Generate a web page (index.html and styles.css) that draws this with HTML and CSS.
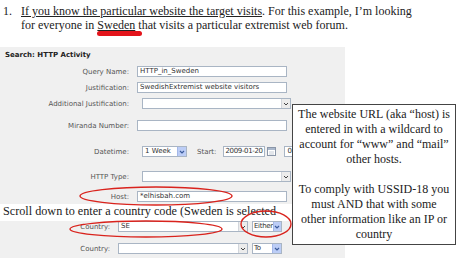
FILE: index.html
```html
<html>
<head>
    <meta http-equiv="Content-Type" content="text/html;charset=utf-8">
    <link rel="stylesheet" href="styles.css">
</head>
<body>
    <div class="intro">
        <span class="num">1.</span>
        <p class="lead"><u>If you know the particular website the target visits</u>. For this example, I’m looking<br>for everyone in <u>Sweden</u> that visits a particular extremist web forum.</p>
    </div>

    <section class="panel">
        <div class="panel-title">Search: HTTP Activity</div>
        <div class="row first">
            <span class="label">Query Name:</span>
            <div class="text">HTTP_in_Sweden</div>
        </div>
        <div class="row">
            <span class="label">Justification:</span>
            <div class="text">SwedishExtremist website visitors</div>
        </div>
        <div class="row">
            <span class="label">Additional Justification:</span>
            <div class="select wide"><span class="value"></span><span class="arrow"><svg width="6" height="4" viewBox="0 0 6 4"><path d="M1 1l2 2 2-2" fill="none" stroke="#444" stroke-width="1"/></svg></span></div>
        </div>
        <div class="row miranda">
            <span class="label">Miranda Number:</span>
            <div class="text"></div>
        </div>
        <div class="row datetime">
            <span class="label">Datetime:</span>
            <div class="select week"><span class="value">1 Week</span><span class="arrow blue"><svg width="6" height="4" viewBox="0 0 6 4"><path d="M1 1l2 2 2-2" fill="none" stroke="#3b5b9c" stroke-width="1.2"/></svg></span></div>
            <span class="start">Start:</span>
            <div class="text date">2009-01-20</div>
            <svg class="cal" width="9" height="9" viewBox="0 0 9 9"><rect x="0.5" y="0.5" width="8" height="8" fill="#fff" stroke="#8a96a8"/><rect x="1" y="1" width="7" height="2" fill="#aab8cc"/><path d="M2 5h5M2 7h5" stroke="#c5ccd6"/></svg>
            <div class="text time">00</div>
        </div>
        <div class="row type">
            <span class="label">HTTP Type:</span>
            <div class="select wide"><span class="value"></span><span class="arrow"><svg width="6" height="4" viewBox="0 0 6 4"><path d="M1 1l2 2 2-2" fill="none" stroke="#444" stroke-width="1"/></svg></span></div>
        </div>
        <div class="row host">
            <span class="label">Host:</span>
            <div class="text">*elhisbah.com</div>
        </div>
    </section>

    <p class="note">Scroll down to enter a country code (Sweden is selected</p>

    <section class="panel countries">
        <div class="row first">
            <span class="label">Country:</span>
            <div class="select combo"><span class="value">SE</span><span class="arrow"><svg width="6" height="4" viewBox="0 0 6 4"><path d="M1 1l2 2 2-2" fill="none" stroke="#444" stroke-width="1"/></svg></span></div>
            <div class="select dir"><span class="value">Either</span><span class="arrow blue"><svg width="6" height="4" viewBox="0 0 6 4"><path d="M1 1l2 2 2-2" fill="none" stroke="#3b5b9c" stroke-width="1.2"/></svg></span></div>
        </div>
        <div class="row gap">
            <span class="label">Country:</span>
            <div class="select combo"><span class="value"></span><span class="arrow"><svg width="6" height="4" viewBox="0 0 6 4"><path d="M1 1l2 2 2-2" fill="none" stroke="#444" stroke-width="1"/></svg></span></div>
            <div class="select dir"><span class="value">To</span><span class="arrow blue"><svg width="6" height="4" viewBox="0 0 6 4"><path d="M1 1l2 2 2-2" fill="none" stroke="#3b5b9c" stroke-width="1.2"/></svg></span></div>
        </div>
    </section>

    <div class="callout">
        The website URL (aka “host) is<br>
        entered in with a wildcard to<br>
        account for “www” and “mail”<br>
        other hosts.<br><br>
        To comply with USSID-18 you<br>
        must AND that with some<br>
        other information like an IP or<br>
        country
    </div>

    <!-- red pen marks drawn over the slide -->
    <svg class="marks" width="460" height="258" viewBox="0 0 460 258">
        <rect x="97" y="31" width="45" height="5" rx="2.5" fill="#e3141b"/>
        <ellipse cx="156" cy="196" rx="76" ry="9" fill="none" stroke="#d9231d" stroke-width="1.4"/>
        <ellipse cx="146" cy="229" rx="76" ry="8" fill="none" stroke="#d9231d" stroke-width="1.4"/>
        <ellipse cx="266" cy="224" rx="25" ry="13" fill="none" stroke="#d9231d" stroke-width="1.4"/>
    </svg>
</body>
</html>
```

FILE: styles.css
```css
body {
    margin: 0;
    width: 460px;
    height: 258px;
    overflow: hidden;
    background: #fff;
    position: relative;
    font-family: 'Liberation Serif', 'Times New Roman', serif;
    color: #222;
}

.intro {
    display: flex;
    padding: 4px 0 0 3px;
    font-size: 12px;
    line-height: 14px;
}

.num {
    width: 18px;
    flex: none;
}

.lead {
    margin: 0;
}

.panel {
    width: 345px;
    margin-top: 15px;
    padding-bottom: 2px;
    background: #f0f0f0;
    font-family: 'DejaVu Sans', Verdana, sans-serif;
    font-size: 7px;
}

.panel-title {
    height: 16px;
    line-height: 16px;
    padding-left: 5px;
    font-weight: bold;
    color: #222;
}

.row {
    display: flex;
    align-items: center;
    height: 11px;
    margin-top: 5px;
}

.row.first { margin-top: 3px; }
.row.miranda { margin-top: 11px; }
.row.datetime { margin-top: 15px; }
.row.type { margin-top: 14px; }
.row.host { margin-top: 9px; }
.row.gap { margin-top: 11px; }

.label {
    width: 129px;
    flex: none;
    text-align: right;
    color: #555;
}

.text {
    box-sizing: border-box;
    width: 150px;
    height: 11px;
    margin-left: 8px;
    padding-left: 2px;
    line-height: 9px;
    border: 1px solid #a9b5c4;
    background: #fff;
    color: #333;
    white-space: nowrap;
    overflow: hidden;
}

.select {
    box-sizing: border-box;
    display: flex;
    height: 11px;
    margin-left: 13px;
    border: 1px solid #a9b5c4;
    background: #fff;
    color: #333;
}

.select .value {
    flex: 1;
    padding-left: 2px;
    line-height: 9px;
    white-space: nowrap;
}

.arrow {
    width: 8px;
    display: flex;
    align-items: center;
    justify-content: center;
    background: #ececec;
    border-left: 1px solid #d2d6dc;
}

.arrow.blue {
    background: #bccdf6;
    border-left: 1px solid #a4b8e8;
}

.select.wide { width: 149px; }
.select.week { width: 45px; }

.start {
    margin-left: 10px;
    color: #555;
}

.text.date {
    width: 42px;
    margin-left: 7px;
    padding-left: 1px;
    letter-spacing: -0.35px;
}

.cal {
    margin-left: 2px;
}

.text.time {
    width: 30px;
    margin-left: 8px;
}

.note {
    margin: 0;
    padding-left: 3px;
    font-size: 12.2px;
    line-height: 14px;
}

.panel.countries {
    margin-top: 0;
    padding-bottom: 6px;
}

.countries .label {
    width: 110px;
}

.select.combo {
    width: 130px;
    margin-left: 8px;
}

.select.dir {
    width: 30px;
    margin-left: 4px;
}

.select.dir .value {
    padding-left: 1px;
    letter-spacing: -0.3px;
}

.callout {
    position: absolute;
    left: 292px;
    top: 104px;
    box-sizing: border-box;
    width: 164px;
    padding: 2px 0;
    border: 1px solid #444;
    background: #fff;
    font-size: 12px;
    line-height: 15px;
    text-align: center;
    color: #222;
}

.marks {
    position: absolute;
    left: 0;
    top: 0;
    pointer-events: none;
}
```
